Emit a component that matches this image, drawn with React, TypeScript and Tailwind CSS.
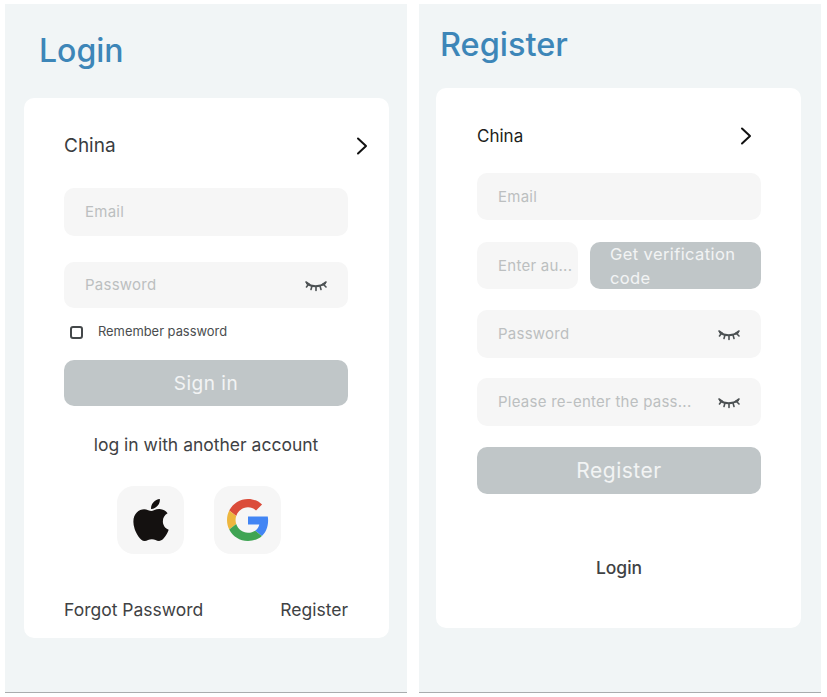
import { FaApple } from "react-icons/fa";

const font = "font-['Inter','Noto_Sans',sans-serif]";

function Lash() {
  return (
    <svg width="22" height="12" viewBox="0 0 22 12" fill="none" stroke="#4c5153" strokeWidth="1.6" strokeLinecap="round">
      <path d="M2 3.5C6 7 15 7 20 3.5" strokeWidth="2" />
      <path d="M1 2L4.5 4.5M7 6L6 9.5M11 6.5V10.5M15 6L16 9.5M17.5 4.5L21 2M19 5L21 7M3 5L1.5 7" />
    </svg>
  );
}

function Chevron() {
  return (
    <svg width="12" height="18" viewBox="0 0 12 18" fill="none" stroke="#111" strokeWidth="2" strokeLinecap="round" strokeLinejoin="round">
      <path d="M2 1.5L10 9L2 16.5" />
    </svg>
  );
}

function GoogleG() {
  return (
    <svg width="42" height="42" viewBox="0 0 48 48">
      <path fill="#DB4C3A" d="M24 9.5c3.54 0 6.71 1.22 9.21 3.6l6.85-6.85C35.9 2.38 30.47 0 24 0 14.62 0 6.51 5.38 2.56 13.22l7.98 6.19C12.43 13.72 17.74 9.5 24 9.5z" />
      <path fill="#4285F4" d="M46.98 24.55c0-1.57-.15-3.09-.38-4.55H24v9.02h12.94c-.58 2.96-2.26 5.48-4.78 7.18l7.73 6c4.51-4.18 7.09-10.36 7.09-17.65z" />
      <path fill="#EDB63E" d="M10.53 28.59c-.48-1.45-.76-2.99-.76-4.59s.27-3.14.76-4.59l-7.98-6.19C.92 16.46 0 20.12 0 24c0 3.88.92 7.54 2.56 10.78l7.97-6.19z" />
      <path fill="#3FA453" d="M24 48c6.48 0 11.93-2.13 15.89-5.81l-7.73-6c-2.15 1.45-4.92 2.3-8.16 2.3-6.26 0-11.57-4.22-13.47-9.91l-7.98 6.19C6.51 42.62 14.62 48 24 48z" />
    </svg>
  );
}

function Field({ label, lash, className = "" }: { label: string; lash?: boolean; className?: string }) {
  return (
    <div className={`flex items-center justify-between bg-[#f6f6f6] rounded-[10px] pl-[21px] pr-[21px] pt-px text-[15px] tracking-[0.25px] text-[#bcbfc0] whitespace-nowrap ${className}`}>
      <span>{label}</span>
      {lash && <Lash />}
    </div>
  );
}

function Panel({ children, className = "" }: { children: React.ReactNode; className?: string }) {
  return <section className={`w-[402px] h-[689px] bg-[#f1f5f6] border-b border-[#a9acae] flex flex-col ${className}`}>{children}</section>;
}

export default function App() {
  return (
    <div className={`w-[827px] h-[697px] bg-white flex pt-1 pl-[5px] gap-3 overflow-hidden ${font}`}>
      <Panel>
        <h1 className="ml-[34px] mt-[26px] h-[42px] leading-[42px] text-[32px] font-medium text-[#3d86b8]">Login</h1>
        <div className="ml-[19px] mt-[26px] w-[365px] h-[540px] bg-white rounded-[10px] pl-10 pr-[41px] flex flex-col">
          <div className="flex items-center justify-between mt-[37px] h-[22px] -mr-[20px] text-[19px] text-[#3a3d3f]">
            <span>China</span>
            <Chevron />
          </div>
          <Field label="Email" className="h-[48px] mt-[31px]" />
          <Field label="Password" lash className="h-[46px] mt-[26px]" />
          <div className="flex items-center mt-[16px] h-[16px] pl-[6px] gap-[15px] text-[12.9px] text-[#4a4d4f]">
            <span className="w-[13px] h-[13px] border-2 border-[#44484a] rounded-[3px]" />
            <span>Remember password</span>
          </div>
          <div className="mt-[20px] h-[46px] pt-[2px] rounded-[10px] bg-[#c0c6c8] text-white/80 flex items-center justify-center text-[19px] tracking-[0.5px]">Sign in</div>
          <p className="mt-[28px] text-center text-[17.5px] leading-[22px] text-[#3f4244]">log in with another account</p>
          <div className="flex justify-center gap-[30px] mt-[30px] pr-[14px]">
            <div className="w-[67px] h-[68px] rounded-[17px] bg-[#f6f6f6] flex items-center justify-center">
              <FaApple className="text-[#141110] text-[48px]" />
            </div>
            <div className="w-[67px] h-[68px] rounded-[17px] bg-[#f6f6f6] flex items-center justify-center">
              <GoogleG />
            </div>
          </div>
          <div className="flex justify-between mt-[45px] text-[17.5px] leading-[22px] text-[#3f4244]">
            <span>Forgot Password</span>
            <span>Register</span>
          </div>
        </div>
      </Panel>
      <Panel>
        <h1 className="ml-[21px] mt-[20px] h-[42px] leading-[42px] text-[32.5px] font-medium text-[#3d86b8]">Register</h1>
        <div className="ml-[17px] mt-[22px] w-[365px] h-[540px] bg-white rounded-[10px] pl-[41px] pr-[40px] flex flex-col">
          <div className="flex items-center justify-between mt-[37px] h-[22px] pr-[9px] text-[17px] text-[#1d1f20]">
            <span className="pt-px">China</span>
            <Chevron />
          </div>
          <Field label="Email" className="h-[47px] mt-[26px]" />
          <div className="flex gap-[12px] mt-[22px] h-[47px]">
            <Field label="Enter au..." className="w-[101px]" />
            <div className="flex-1 rounded-[10px] bg-[#c0c6c8] text-white/80 pl-[20px] text-[16.5px] leading-[24px] tracking-[0.4px] overflow-hidden">Get verification code</div>
          </div>
          <Field label="Password" lash className="h-[48px] mt-[21px]" />
          <Field label="Please re-enter the pass..." lash className="h-[48px] mt-[20px]" />
          <div className="mt-[21px] h-[47px] pt-px rounded-[10px] bg-[#c0c6c8] text-white/80 flex items-center justify-center text-[21px] tracking-[0.5px]">Register</div>
          <p className="mt-[63px] text-center text-[17.5px] leading-[22px] font-medium text-[#3f4244]">Login</p>
        </div>
      </Panel>
    </div>
  );
}
